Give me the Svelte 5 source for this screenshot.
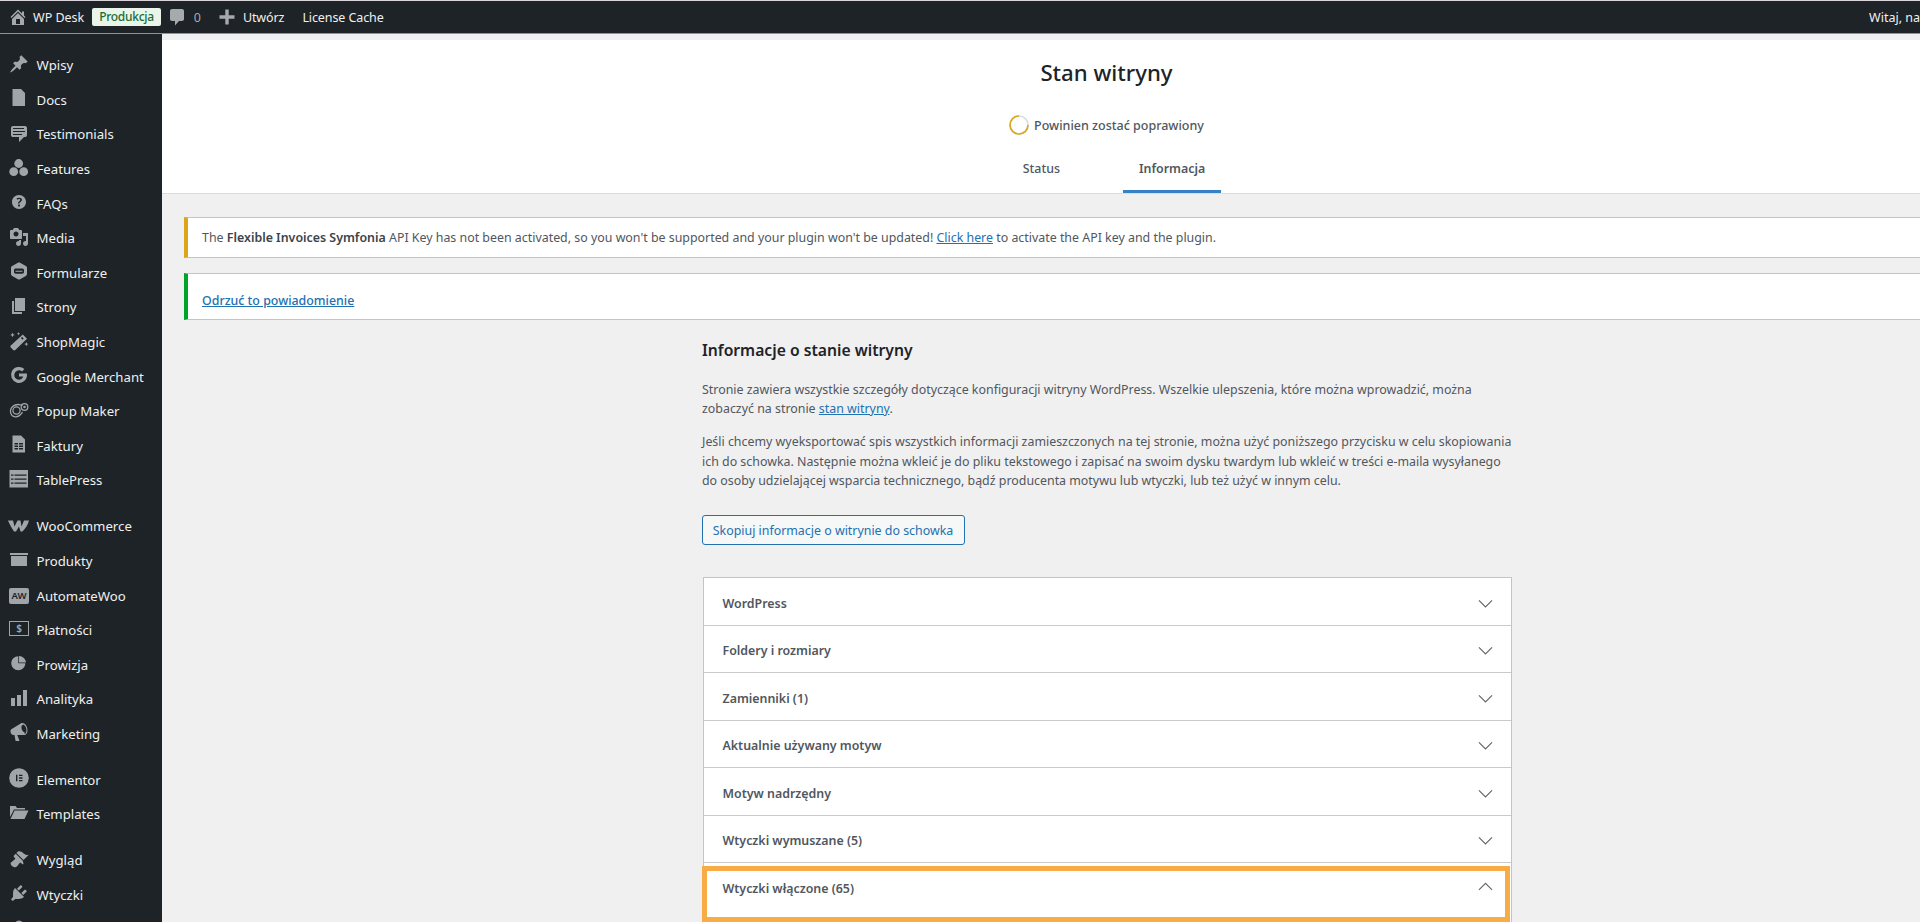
<script>
  const icons = {
    pin: 'M10.44 3.02l1.82-1.82 6.36 6.35-1.83 1.82c-1.05-.68-2.48-.57-3.41.36l-.75.75c-.92.93-1.04 2.35-.35 3.41l-1.83 1.82-2.41-2.41-2.8 2.79c-.42.42-3.38 2.71-3.8 2.29s1.86-3.39 2.28-3.81l2.79-2.79L4.1 9.36l1.83-1.82c1.05.69 2.48.57 3.4-.36l.75-.75c.93-.92 1.05-2.35.36-3.41z',
    doc: 'M3.500 1h8.500l4 4v13H3.500z',
    testimonial: 'M4 3h12c.55 0 1.02.2 1.41.59S18 4.45 18 5v7c0 .55-.2 1.02-.59 1.41S16.55 14 16 14h-1l-5 5v-5H4c-.55 0-1.02-.2-1.41-.59S2 12.55 2 12V5c0-.55.2-1.02.59-1.41S3.45 3 4 3zm11 2H4v1h11V5zm1 3H4v1h12V8zm-3 3H4v1h9v-1z',
    features: 'M9.700 1.100a4.400 4.400 0 1 1 0 8.800 4.400 4.400 0 0 1 0-8.800zM4.700 9.300a4.400 4.400 0 1 1 0 8.800 4.400 4.400 0 0 1 0-8.800zM14.700 9.300a4.400 4.400 0 1 1 0 8.800 4.400 4.400 0 0 1 0-8.800z',
    help: 'M17 10c0-3.87-3.14-7-7-7-3.87 0-7 3.13-7 7s3.13 7 7 7c3.86 0 7-3.13 7-7zm-6.3 1.48H9.14v-.43c0-.38.08-.7.24-.98s.46-.57.88-.89c.41-.29.68-.53.81-.71.14-.18.2-.39.2-.62 0-.25-.09-.44-.28-.58-.19-.13-.45-.19-.79-.19-.58 0-1.25.19-2 .57l-.64-1.28c.87-.49 1.8-.74 2.77-.74.81 0 1.45.2 1.92.58.48.39.71.91.71 1.55 0 .43-.09.8-.29 1.11-.19.32-.57.67-1.11 1.06-.38.28-.61.49-.71.63-.1.15-.15.34-.15.57v.35zm-1.47 2.74c-.18-.17-.27-.42-.27-.73 0-.33.08-.58.26-.75s.43-.25.77-.25c.32 0 .57.09.75.26s.27.42.27.74c0 .3-.09.55-.27.72-.18.18-.43.27-.75.27-.33 0-.58-.09-.76-.26z',
    media: 'M13 11V4c0-.55-.45-1-1-1h-1.67L9 1H5L3.67 3H2c-.55 0-1 .45-1 1v7c0 .55.45 1 1 1h10c.55 0 1-.45 1-1zM7 4.5c1.38 0 2.5 1.12 2.5 2.5S8.38 9.5 7 9.5 4.5 8.38 4.5 7 5.62 4.5 7 4.5zM14 6h5v10.5c0 1.38-1.12 2.5-2.5 2.5S14 17.88 14 16.5s1.12-2.5 2.5-2.5c.17 0 .34.02.5.05V9h-3V6zm-4 8.05V13h2v3.5c0 1.38-1.12 2.5-2.5 2.5S7 17.88 7 16.5 8.12 14 9.5 14c.17 0 .34.02.5.05z',
    form: 'M10 1.500c.4 0 .8.1 1.100.3l5.700 3.200c.7.4 1.200 1.100 1.200 1.900v6.200c0 .8-.5 1.500-1.200 1.900l-5.700 3.200c-.7.4-1.500.4-2.200 0l-5.700-3.200C2.500 14.600 2 13.900 2 13.100V6.900c0-.8.5-1.500 1.200-1.900l5.700-3.200c.3-.2.7-.3 1.100-.3zM6.800 7.500c-1 0-1.800.7-1.800 1.700v1.800c0 1 .8 1.700 1.800 1.700h6.400c1 0 1.800-.7 1.800-1.700V9.200c0-1-.8-1.700-1.800-1.700zM6.500 9.800h7v.9h-7z',
    page: 'M6 15V2h10v13H6zm-1 1h8v2H3V5h2v11z',
    wand: 'M13.800 3.500l4.200 4.200L6.300 19c-.6.6-1.500.6-2.100 0l-2.400-2.400c-.6-.6-.6-1.500 0-2.100zM11.900 7.100l1.600 1.600 1.200-1.200-1.600-1.600zM3.500 1.500l.7 1.700 1.700.7-1.700.7-.7 1.700-.7-1.700L1 3.900l1.800-.7zM17.300 11l.6 1.500 1.500.6-1.500.6-.6 1.500-.6-1.500-1.500-.6 1.500-.6zM9.500 1l.5 1.200 1.200.5-1.200.5-.5 1.200-.5-1.200-1.200-.5 1.200-.5z',
    google: 'M17.800 8.400H10v3.200h4.200c-.5 2-2.200 3.100-4.200 3.100a4.700 4.700 0 1 1 3-8.300l2.400-2.400A8 8 0 1 0 18 10c0-.6-.1-1.100-.2-1.600z',
    invoice: 'M3.500 1.500h8.500l4 4v13H3.500zM5.500 9v1.500h3.500V9zM10 9v1.500h4V9zM5.500 11.500V13h3.500v-1.500zM10 11.500V13h4v-1.500zM5.500 14v1.500h3.500V14zM10 14v1.500h4V14z',
    table: 'M.5 1h18.500v17.500H.5zM2 5.400v1.400h2.500V5.400zM5.500 5.400v1.400h12V5.400zM2 9.400v1.400h2.500V9.400zM5.500 9.400v1.400h12V9.400zM2 13.400v1.400h2.500v-1.400zM5.500 13.400v1.400h12v-1.400z',
    woo: 'M-1 5.500h5l1.500 6 3-6h3l1 6 2.500-6h5c-1 4-3.500 8-6.500 11h-2l-1.500-5-3 5H5C2.500 13 .5 9-1 5.500z',
    archive: 'M19 4v2H1V4h18zM2 7h16v10H2V7z',
    pie: 'M10 9.500V3c3.600.1 6.900 3 7 6.500zM9.300 3.300v7h7c0 3.800-3.200 7-7 7s-7-3.200-7-7 3.200-7 7-7z',
    bars: 'M18 18V2h-4v16h4zm-6 0V7H8v11h4zm-6 0v-8H2v8h4z',
    megaphone: 'M18.150 5.940c.46 1.620.38 3.220-.02 4.480-.42 1.280-1.260 2.180-2.300 2.480-.16.06-.26.06-.4.06-.06.02-.12.02-.18.02-.06.02-.14.02-.22.02h-6.800l2.220 5.500c.02.14-.06.26-.14.34-.08.1-.24.16-.34.16H6.950c-.1 0-.26-.06-.34-.16-.08-.08-.16-.2-.14-.34l-1-5.500H4.250l-.02-.02c-.5.06-1.080-.18-1.540-.62s-.88-1.080-1.060-1.880c-.24-.8-.2-1.560-.02-2.200.18-.62.58-1.080 1.060-1.300l.02-.02 9-5.400c.1-.06.18-.1.24-.16.06-.04.14-.08.24-.12.16-.08.28-.12.5-.18 1.040-.3 2.240.1 3.220 1 .98.88 1.800 2.240 2.260 3.860zm-2.580 5.980h-.02c.4-.1.74-.34 1.040-.7.58-.7.86-1.760.86-3.040-.02-.64-.12-1.300-.3-2-.2-.78-.52-1.480-.9-2.040-.38-.56-.82-.96-1.200-1.200-.38-.26-.68-.28-.96-.2-.02 0-.04 0-.06.02-.02.02-.04.02-.06.02-.36.12-.66.3-.94.6l-.06.06c-.34.46-.52 1.120-.52 1.980 0 .44.06.94.2 1.460v.04c.1.4.24.78.4 1.140.36.78.84 1.420 1.320 1.780.46.38.88.48 1.220.38z',
    elementor: 'M10 .2a9.800 9.800 0 1 1 0 19.600A9.800 9.800 0 0 1 10 .2zM7 6.800v6.400h1.400V6.800zM10 6.800v1.300h3.500V6.800zM10 9.350v1.300h3.500v-1.300zM10 11.900v1.300h3.500v-1.300z',
    folder: 'M1 3h5.500L8 5h8v1.500H5L1 14zM5.500 7.500H19.500L15.500 16H1.500z',
    brush: 'M14.480 11.060L7.410 3.990l1.500-1.500c.5-.56 2.300-.47 3.510.32 1.210.8 1.430 1.280 2.910 2.100 1.180.64 2.450 1.260 4.450.85zm-.71.71L6.700 4.700 4.930 6.470c-.39.39-.39 1.020 0 1.410l1.060 1.060c.39.39.39 1.030 0 1.420-.6.6-1.430 1.110-2.210 1.690-.35.26-.7.53-1.010.84C1.430 13.230.99 14.380 3 17c2.620 2 3.770 1.570 5.120.22.31-.31.58-.66.84-1.010.58-.78 1.090-1.610 1.690-2.210.39-.39 1.030-.39 1.420 0l1.060 1.060c.39.39 1.020.39 1.410 0z',
    plug: 'M13.110 4.360L9.870 7.600 8 5.730l3.240-3.240c.35-.34 1.050-.2 1.560.32.52.51.66 1.210.31 1.550zm-8 1.770l.91-1.120 9.010 9.010-1.190.84c-.71.71-2.630 1.160-3.820 1.160H6.140L4.900 17.260c-.59.59-1.540.59-2.120 0-.59-.58-.59-1.530 0-2.120l1.240-1.240v-3.880c0-1.130.4-3.190 1.090-3.890zm7.260 3.970l3.240-3.240c.34-.35 1.040-.21 1.550.31.52.51.66 1.210.31 1.550l-3.240 3.250z',
    user: 'M10 2.500a4 4 0 1 1 0 8 4 4 0 0 1 0-8zM3 18c0-4 3-7 7-7s7 3 7 7z'
  };

  const groups = [
    [
      ['Wpisy', 'pin'], ['Docs', 'doc'], ['Testimonials', 'testimonial'], ['Features', 'features'],
      ['FAQs', 'help'], ['Media', 'media'], ['Formularze', 'form'], ['Strony', 'page'],
      ['ShopMagic', 'wand'], ['Google Merchant', 'google'], ['Popup Maker', 'popup'],
      ['Faktury', 'invoice'], ['TablePress', 'table']
    ],
    [
      ['WooCommerce', 'woo'], ['Produkty', 'archive'], ['AutomateWoo', 'aw'], ['Płatności', 'bill'],
      ['Prowizja', 'pie'], ['Analityka', 'bars'], ['Marketing', 'megaphone']
    ],
    [['Elementor', 'elementor'], ['Templates', 'folder']],
    [['Wygląd', 'brush'], ['Wtyczki', 'plug'], ['', 'user']]
  ];

  const rows = [
    'WordPress', 'Foldery i rozmiary', 'Zamienniki (1)', 'Aktualnie używany motyw',
    'Motyw nadrzędny', 'Wtyczki wymuszane (5)'
  ];
</script>

<div class="page">
  <header class="topbar">
    <svg class="bar-ico" viewBox="0 0 20 20"><path d="M16 8.500l1.530 1.530-1.060 1.060L10 4.620l-6.470 6.470-1.060-1.060L10 2.500l4 4v-2h2v4zm-6-2.460l6 5.990V18H4v-5.970zM12 17v-5H8v5h4z" /></svg>
    <span class="site">WP Desk</span>
    <span class="badge">Produkcja</span>
    <svg class="bar-ico comment" viewBox="0 0 20 20"><path d="M5 2h10c1.100 0 2 .9 2 2v8c0 1.100-.9 2-2 2h-3l-4 4.500V14H5c-1.100 0-2-.9-2-2V4c0-1.100.9-2 2-2z" /></svg>
    <span class="count">0</span>
    <svg class="bar-ico plus" viewBox="0 0 20 20"><path d="M8.300 2.500h3.400v5.800h5.800v3.400h-5.800v5.800H8.300v-5.800H2.500V8.300h5.800z" /></svg>
    <span class="utw">Utwórz</span>
    <span class="cache">License Cache</span>
    <span class="hello">Witaj, na</span>
  </header>

  <div class="body">
    <nav class="side">
      {#each groups as group}
        <ul class="group">
          {#each group as [label, icon]}
            <li class="item">
              {#if icon === 'aw'}
                <span class="aw">AW</span>
              {:else if icon === 'bill'}
                <span class="bill">$</span>
              {:else if icon === 'popup'}
                <svg class="ico" viewBox="0 0 20 20">
                  <path class="line" d="M1.500 10.500C1.800 7 5 4.500 9 4.500c2 0 3 .8 4.500.8M3 15.500c-1.400-1.500-1.800-3.200-1.500-5M3 15.500c1.700 1.700 5 1.700 7 .4 1.700-1.100 2.500-2.800 3.600-3.700" />
                  <circle class="line" cx="7.500" cy="10.500" r="3.600" />
                  <circle class="line" cx="15.500" cy="7" r="3.300" />
                  <circle cx="15.500" cy="7" r="1.300" />
                </svg>
              {:else}
                <svg class="ico" viewBox="0 0 20 20"><path fill-rule="evenodd" d={icons[icon]} /></svg>
              {/if}
              {#if label}<span>{label}</span>{/if}
            </li>
          {/each}
        </ul>
      {/each}
    </nav>

    <main class="main">
      <section class="head">
        <h1>Stan witryny</h1>
        <div class="status">
          <svg class="ring" viewBox="0 0 20 20">
            <circle class="ring-bg" cx="10" cy="10" r="9" />
            <path class="ring-fg" d="M19 10A9 9 0 1 1 10 1" />
          </svg>
          <span>Powinien zostać poprawiony</span>
        </div>
        <div class="tabs">
          <span class="tab">Status</span>
          <span class="tab active">Informacja</span>
        </div>
      </section>

      <div class="notice warn">
        <p>The <b>Flexible Invoices Symfonia</b> API Key has not been activated, so you won't be supported and your plugin won't be updated! <a href="#top">Click here</a> to activate the API key and the plugin.</p>
      </div>
      <div class="notice ok">
        <a href="#top">Odrzuć to powiadomienie</a>
      </div>

      <section class="info">
        <h2>Informacje o stanie witryny</h2>
        <p class="first">Stronie zawiera wszystkie szczegóły dotyczące konfiguracji witryny WordPress. Wszelkie ulepszenia, które można wprowadzić, można<br />zobaczyć na stronie <a href="#top">stan witryny</a>.</p>
        <p class="second">Jeśli chcemy wyeksportować spis wszystkich informacji zamieszczonych na tej stronie, można użyć poniższego przycisku w celu skopiowania<br />ich do schowka. Następnie można wkleić je do pliku tekstowego i zapisać na swoim dysku twardym lub wkleić w treści e-maila wysyłanego<br />do osoby udzielającej wsparcia technicznego, bądź producenta motywu lub wtyczki, lub też użyć w innym celu.</p>
        <button class="copy">Skopiuj informacje o witrynie do schowka</button>

        <div class="accordion">
          {#each rows as row}
            <div class="row">
              <span>{row}</span>
              <svg class="chev" viewBox="0 0 16 10"><path d="M1 1.500l7 7 7-7" /></svg>
            </div>
          {/each}
          <div class="row open">
            <span>Wtyczki włączone (65)</span>
            <svg class="chev" viewBox="0 0 16 10"><path d="M1 8.500l7-7 7 7" /></svg>
          </div>
        </div>
      </section>
    </main>
  </div>
</div>

<style>
  :global(body) {
    margin: 0;
    background: #f0f0f1;
  }
  .page {
    width: 1920px;
    height: 922px;
    overflow: hidden;
    display: flex;
    flex-direction: column;
    font-family: "Noto Sans", "Open Sans", sans-serif;
    font-size: 12.4px;
    color: #50575e;
    background: #f0f0f1;
  }
  .topbar {
    flex: none;
    box-sizing: border-box;
    height: 34px;
    display: flex;
    align-items: center;
    background: #1d2327;
    border-top: 1px solid #d9d5da;
    border-bottom: 1px solid #8f9295;
    color: #f0f0f1;
    font-size: 12.5px;
    padding-left: 8px;
  }
  .bar-ico {
    width: 20px;
    height: 20px;
    fill: #a7aaad;
    flex: none;
  }
  .site { margin-left: 5px; }
  .badge {
    margin-left: 8px;
    padding: 0 7px;
    height: 18px;
    line-height: 18px;
    border-radius: 2px;
    background: #e9f5e9;
    color: #1f6b35;
    font-weight: 500;
    font-size: 12px;
    letter-spacing: -0.3px;
  }
  .comment { margin-left: 6px; }
  .count { margin-left: 7px; color: #a7aaad; }
  .plus { margin-left: 16.500px; }
  .utw { margin-left: 5.500px; letter-spacing: -0.1px; }
  .cache { margin-left: 18px; letter-spacing: -0.1px; }
  .hello { margin-left: auto; white-space: nowrap; }

  .body {
    flex: 1;
    display: flex;
    min-height: 0;
  }
  .side {
    flex: none;
    width: 161.500px;
    background: #1d2327;
    padding-top: 14px;
    box-sizing: border-box;
  }
  .group {
    list-style: none;
    margin: 0 0 11.300px;
    padding: 0;
  }
  .item {
    height: 34.600px;
    display: flex;
    align-items: center;
    padding-left: 9px;
    gap: 7.500px;
    color: #f0f0f1;
    font-size: 13.200px;
    white-space: nowrap;
  }
  .ico {
    width: 20px;
    height: 20px;
    flex: none;
    fill: #a0a5aa;
    overflow: visible;
    margin-bottom: 3px;
  }
  .line {
    fill: none;
    stroke: #a0a5aa;
    stroke-width: 1.300;
  }
  .aw {
    flex: none;
    width: 20px;
    height: 16px;
    border-radius: 2px;
    background: #a0a5aa;
    color: #1d2327;
    font-size: 9.500px;
    line-height: 16px;
    text-align: center;
    font-weight: 600;
  }
  .bill {
    flex: none;
    box-sizing: border-box;
    width: 20px;
    height: 15.500px;
    border: 1.500px solid #a0a5aa;
    color: #a0a5aa;
    font-size: 10px;
    line-height: 12.500px;
    text-align: center;
    font-weight: 600;
    margin-bottom: 3px;
  }

  .main {
    flex: none;
    width: 1890px;
    display: flex;
    flex-direction: column;
  }
  .main > * { flex: none; }
  .head {
    margin-top: 6px;
    height: 154px;
    box-sizing: border-box;
    background: #fff;
    border-bottom: 1px solid #dcdcde;
    display: flex;
    flex-direction: column;
    align-items: center;
  }
  h1 {
    margin: 0;
    height: 66px;
    line-height: 66px;
    font-size: 22.200px;
    font-weight: 500;
    color: #1d2327;
  }
  .status {
    height: 38px;
    display: flex;
    align-items: center;
    gap: 5px;
    font-weight: 500;
    font-size: 12.500px;
  }
  .ring {
    width: 20px;
    height: 20px;
  }
  .ring-bg, .ring-fg { fill: none; stroke-width: 1.600; }
  .ring-bg { stroke: #dcdcde; }
  .ring-fg { stroke: #dba617; }
  .tabs {
    flex: 1;
    display: flex;
    gap: 47px;
    padding-left: 15px;
  }
  .tab {
    box-sizing: border-box;
    height: 49px;
    padding: 0 16px;
    line-height: 50px;
    font-weight: 500;
  }
  .tab.active {
    border-bottom: 3px solid #3582c4;
    color: #50575e;
    font-weight: 600;
  }

  .notice {
    box-sizing: border-box;
    margin-left: 22.500px;
    background: #fff;
    border: 1px solid #c3c4c7;
    padding-left: 14px;
  }
  .notice p { margin: 0; white-space: nowrap; }
  .warn {
    margin-top: 23px;
    height: 41px;
    line-height: 39px;
    border-left: 4px solid #dba617;
  }
  .warn b { font-weight: 600; color: #3c434a; }
  .ok {
    margin-top: 15px;
    height: 47px;
    line-height: 18px;
    padding-top: 18px;
    border-left: 4px solid #00a32a;
    font-weight: 500;
  }
  a { color: #2271b1; text-decoration: underline; }

  .info {
    align-self: center;
    width: 810px;
    box-sizing: border-box;
  }
  h2 {
    margin: 18px 0 0;
    padding-left: 0.500px;
    font-size: 15.700px;
    line-height: 24px;
    font-weight: 600;
    color: #1d2327;
  }
  .info p {
    margin: 0;
    padding-left: 0.500px;
    line-height: 19.500px;
    white-space: nowrap;
  }
  .first { padding-top: 17.500px; }
  .second { padding-top: 13.500px; }
  .copy {
    display: block;
    margin-top: 24.500px;
    width: 263px;
    height: 30px;
    padding: 0;
    border: 1px solid #2271b1;
    border-radius: 3px;
    background: #f6f7f7;
    color: #2271b1;
    font: inherit;
  }
  .accordion {
    margin-top: 32px;
    margin-left: 1px;
    background: #fff;
    border: 1px solid #c3c4c7;
    border-bottom: 0;
  }
  .row {
    box-sizing: border-box;
    height: 47.500px;
    display: flex;
    align-items: center;
    justify-content: space-between;
    padding: 4px 17.500px 0 19px;
    border-bottom: 1px solid #c9cacd;
    font-weight: 600;
  }
  .chev {
    width: 15px;
    height: 9.400px;
    fill: none;
    stroke: #5f656b;
    stroke-width: 1.200;
  }
  .row.open {
    margin: 3px 1px 0 -2px;
    height: 56px;
    padding: 0 11.300px 0 16px;
    align-items: flex-start;
    border: 5px solid #f8ac45;
    line-height: 36px;
  }
  .row.open .chev { margin-top: 11px; }
</style>
